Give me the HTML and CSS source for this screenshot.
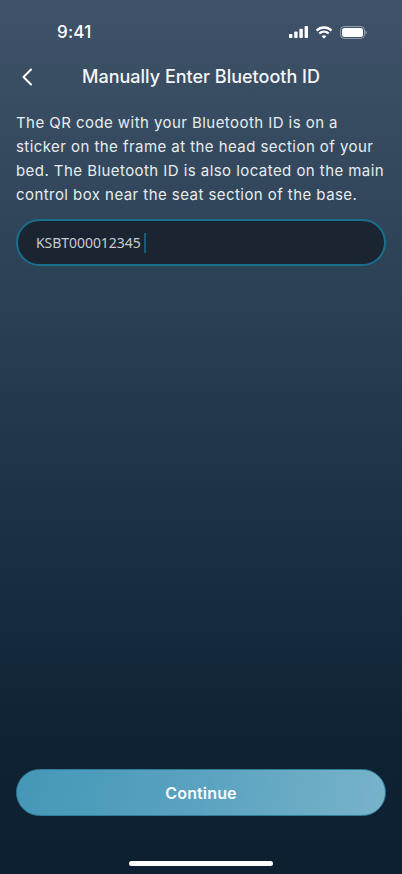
FILE: index.html
```html
<!DOCTYPE html>
<html lang="en">
<head>
<meta charset="utf-8">
<title>Manually Enter Bluetooth ID</title>
<link rel="stylesheet" href="styles.css">
</head>
<body>
<main class="screen">
  <div class="status-bar">
    <span class="time">9:41</span>
    <div class="status-icons">
      <svg class="signal" width="19" height="12" viewBox="0 0 19 12"><rect x="0" y="8" width="3.400" height="4" rx=".8"/><rect x="5.200" y="5.500" width="3.400" height="6.500" rx=".8"/><rect x="10.400" y="2.800" width="3.400" height="9.200" rx=".8"/><rect x="15.600" y="0" width="3.400" height="12" rx=".8"/></svg>
      <svg class="wifi" width="18" height="13" viewBox="0 0 17 12"><path d="M8.500 2.500c2.400 0 4.600.9 6.200 2.500L16.300 3.400A11 11 0 0 0 8.500.2 11 11 0 0 0 .7 3.400L2.300 5a8.800 8.800 0 0 1 6.200-2.500z"/><path d="M8.500 6.200c1.400 0 2.700.5 3.700 1.500l1.500-1.500a7.400 7.400 0 0 0-10.400 0l1.500 1.500c1-1 2.300-1.500 3.700-1.500z"/><path d="M8.500 8.600c-.9 0-1.600.3-2.200.9l2.200 2.300 2.200-2.300c-.6-.6-1.300-.9-2.200-.9z"/></svg>
      <svg class="battery" width="27" height="13" viewBox="0 0 27 13"><rect class="battery-case" x=".5" y=".5" width="24" height="12" rx="3.800"/><rect x="2" y="2" width="21" height="9" rx="2.500"/><path class="battery-cap" d="M25.500 4.500v4c.8-.3 1.300-1.100 1.300-2s-.5-1.700-1.300-2z"/></svg>
    </div>
  </div>

  <header class="nav">
    <button class="back" type="button" aria-label="Back">
      <svg width="12" height="18" viewBox="0 0 12 18"><path d="M10 1.500 2.500 9l7.500 7.500"/></svg>
    </button>
    <h1 class="title">Manually Enter Bluetooth ID</h1>
  </header>

  <section class="content">
    <p class="intro">The QR code with your Bluetooth ID is on a sticker on the frame at the head section of your bed. The Bluetooth ID is also located on the main control box near the seat section of the base.</p>
    <div class="field"><span class="field-text">KSBT000012345</span><span class="caret"></span></div>
  </section>

  <div class="actions">
    <button class="continue" type="button">Continue</button>
  </div>

  <div class="home-area"><span class="home-indicator"></span></div>
</main>
</body>
</html>
```

FILE: styles.css
```css
* { box-sizing: border-box; }
html, body { margin: 0; padding: 0; }
body { width: 402px; height: 874px; overflow: hidden; background: #0e2133; font-family: Inter, "Liberation Sans", sans-serif; color: #fff; }

.screen {
  width: 402px;
  height: 874px;
  display: flex;
  flex-direction: column;
  background: linear-gradient(180deg, #3f5269 0%, #34495e 18%, #2a4053 35%, #1a3144 60%, #0f2234 85%, #0d2032 100%);
}

.status-bar { height: 50px; padding: 14px 35px 0 57px; display: flex; justify-content: space-between; align-items: center; flex-shrink: 0; }
.time { font-size: 17px; font-weight: 500; line-height: 22px; letter-spacing: .2px; }
.status-icons { display: flex; align-items: center; gap: 7px; }
.status-icons svg { display: block; fill: #fff; }
.battery-case { fill: none; stroke: #fff; stroke-opacity: .45; }
.battery-cap { fill-opacity: .45; }

.nav { height: 54px; display: flex; align-items: center; justify-content: center; position: relative; flex-shrink: 0; }
.back { position: absolute; left: 21px; top: 18px; padding: 0; border: 0; background: none; display: block; width: 12px; height: 18px; }
.back svg { display: block; fill: none; stroke: #fff; stroke-width: 2; stroke-linecap: round; stroke-linejoin: round; }
.title { margin: 0; font-size: 18px; font-weight: 500; line-height: 24px; color: #f4f6f8; }

.content { padding: 7px 16px 0; }
.intro { margin: 0; font-size: 15px; line-height: 24px; letter-spacing: .44px; color: #e8ecef; }
.field { margin-top: 12px; height: 47px; padding: 0 18px; border: 2px solid #1a6f8d; border-radius: 24px; background: #1b2532; display: flex; align-items: center; }
.field-text { font-family: "Noto Sans", "Open Sans", sans-serif; font-size: 14px; line-height: 20px; letter-spacing: -.05px; color: #c6cbd1; }
.caret { width: 2px; height: 20px; margin-left: 3px; background: #1a5a75; }

.actions { margin-top: auto; padding: 0 16px; }
.continue { display: block; width: 100%; height: 47px; padding: 0; border: 1px solid #2f7d99; border-radius: 24px; background: linear-gradient(100deg, #4597b7 0%, #5aa3c0 50%, #78b3ca 100%); color: #f6fafc; font-family: Inter, "Liberation Sans", sans-serif; font-size: 16px; font-weight: 600; letter-spacing: .15px; }

.home-area { height: 58px; padding-top: 45px; display: flex; justify-content: center; flex-shrink: 0; }
.home-indicator { width: 144px; height: 5px; border-radius: 3px; background: #fff; }
```
